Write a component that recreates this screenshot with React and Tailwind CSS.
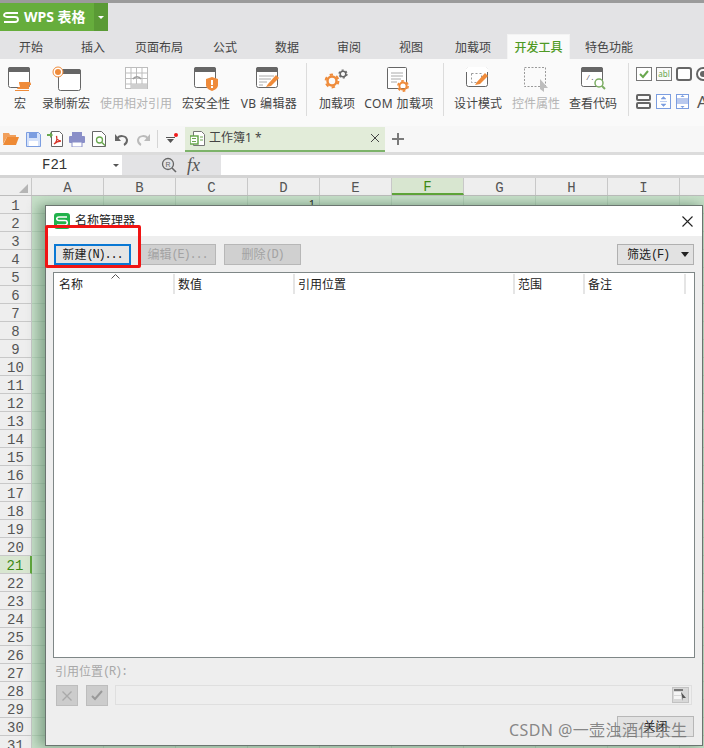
import React from "react";

const cjk = "font-['Microsoft_YaHei','Noto_Sans','Noto_Sans_CJK_SC',sans-serif]";
const mono = "font-['Liberation_Mono','Noto_Sans_CJK_SC',monospace]";
const half = "font-['Liberation_Mono',monospace] text-[12px] tracking-[-1.2px]";

const Win = ({ x = 0, y = 0, w = 22, h = 21, bar = "#666" }) => (
  <g>
    <rect x={x + 0.5} y={y + 0.5} width={w} height={h} rx="2" fill="#fff" stroke="#666" />
    <path d={`M${x} ${y + 2}a2 2 0 0 1 2-2h${w - 3}a2 2 0 0 1 2 2v3h-${w + 1}z`} fill={bar} />
  </g>
);

const Pencil = ({ x, y }) => (
  <g transform={`translate(${x} ${y})`}>
    <path d="M2 11 L10 2 L13 5 L5 13 L0 14z" fill="#ef8b3a" />
  </g>
);

const Gear = ({ cx, cy, r, c, hole = "#fff" }) => (
  <g>
    <circle cx={cx} cy={cy} r={r} fill="none" stroke={c} strokeWidth={r * 0.55} />
    <circle cx={cx} cy={cy} r={r + r * 0.42} fill="none" stroke={c} strokeWidth={r * 0.45} strokeDasharray={`${r * 0.75} ${r * 0.75}`} />
    <circle cx={cx} cy={cy} r={r * 0.5} fill={hole} />
  </g>
);

const icons = {
  macro: (
    <svg width="28" height="26" viewBox="0 0 28 26">
      <Win x={1} y={1} w={21} h={20} />
      <path d="M12 16h10a2 2 0 0 1 2 2v1l-2 0 0 4H10l1-2h2l-1-4z" fill="#ef8b3a" />
      <path d="M8 24h14v1H8z" fill="#ef8b3a" />
    </svg>
  ),
  rec: (
    <svg width="30" height="28" viewBox="0 0 30 28">
      <Win x={6} y={3} w={22} h={21} />
      <circle cx="6" cy="6" r="5" fill="#fff" stroke="#ef8b3a" />
      <circle cx="6" cy="6" r="3" fill="#ef8b3a" />
    </svg>
  ),
  rel: (
    <svg width="26" height="26" viewBox="0 0 26 26" fill="none" stroke="#bdbdbd">
      <rect x="1.5" y="1.5" width="22" height="21" fill="#fff" />
      <path d="M7 2v20M12.5 2v20M18 2v20M2 7h21M2 12.500h21M2 18h21" />
      <rect x="7" y="18" width="16" height="5" fill="#cfcfcf" stroke="none" />
      <path d="M9 13c2-3 6-3 8 0" stroke="#9c9c9c" strokeWidth="1.500" />
    </svg>
  ),
  sec: (
    <svg width="28" height="26" viewBox="0 0 28 26">
      <Win x={1} y={1} w={21} h={20} />
      <path d="M13 13l6-2 6 2v6c0 3-3 5-6 6-3-1-6-3-6-6z" fill="#ef8b3a" />
      <rect x="18" y="14" width="2" height="5" fill="#fff" />
      <rect x="18" y="20" width="2" height="2" fill="#fff" />
    </svg>
  ),
  vb: (
    <svg width="30" height="26" viewBox="0 0 30 26">
      <Win x={1} y={1} w={21} h={20} />
      <path d="M4 10h15M4 13h12M4 16h8M4 19h4" stroke="#aaa" />
      <Pencil x={11} y={7} />
    </svg>
  ),
  addin: (
    <svg width="30" height="26" viewBox="0 0 30 26">
      <Gear cx={9} cy={15} r={4.500} c="#ef8b3a" hole="#fafafa" />
      <Gear cx={20} cy={8} r={2.800} c="#666" hole="#fafafa" />
    </svg>
  ),
  com: (
    <svg width="28" height="28" viewBox="0 0 28 28">
      <path d="M1.500 2.500a1 1 0 0 1 1-1h17a1 1 0 0 1 1 1V22.500h-19z" fill="#fff" stroke="#666" />
      <path d="M5 7h12M5 10h12M5 13h10M5 16h6" stroke="#aaa" />
      <Gear cx={17} cy={20} r={3.600} c="#ef8b3a" hole="#fff" />
    </svg>
  ),
  design: (
    <svg width="28" height="26" viewBox="0 0 28 26">
      <Win x={1} y={1} w={21} h={19} bar="#fff" />
      <rect x="6.500" y="7.500" width="10" height="9" fill="none" stroke="#999" strokeDasharray="2 2" />
      <Pencil x={10} y={5} />
    </svg>
  ),
  ctrl: (
    <svg width="28" height="28" viewBox="0 0 28 28">
      <rect x="1.500" y="1.500" width="21" height="19" fill="none" stroke="#999" strokeDasharray="2 1.500" />
      <path d="M17 13l8 9h-4v4l-4 -3z" fill="#bdbdbd" />
    </svg>
  ),
  code: (
    <svg width="28" height="26" viewBox="0 0 28 26">
      <Win x={1} y={1} w={21} h={19} />
      <text x="6" y="14" fontSize="7" fill="#555" fontFamily="Liberation Mono">/...</text>
      <circle cx="19" cy="17" r="4" fill="#fff" stroke="#7cae63" strokeWidth="1.500" />
      <path d="M22 20l3 3" stroke="#7cae63" strokeWidth="2" />
    </svg>
  ),
};

const ribbon = [
  { w: "w-[40px]", icon: icons.macro, label: "宏" },
  { w: "w-[52px]", icon: icons.rec, label: "录制新宏" },
  { w: "w-[88px]", icon: icons.rel, label: "使用相对引用", off: true },
  { w: "w-[52px]", icon: icons.sec, label: "宏安全性" },
  { w: "w-[74px]", icon: icons.vb, label: "VB 编辑器", wide: true },
  { sep: true },
  { w: "w-[60px]", icon: icons.addin, label: "加载项" },
  { w: "w-[64px]", icon: icons.com, label: "COM 加载项", wide: true },
  { w: "w-[12px]" },
  { sep: true },
  { w: "w-[68px]", icon: icons.design, label: "设计模式" },
  { w: "w-[48px]", icon: icons.ctrl, label: "控件属性", off: true },
  { w: "w-[66px]", icon: icons.code, label: "查看代码" },
  { w: "w-[2px]" },
  { sep: true },
];

const tabs = [
  ["开始", "w-[62px]"],
  ["插入", "w-[62px]"],
  ["页面布局", "w-[70px]"],
  ["公式", "w-[62px]"],
  ["数据", "w-[62px]"],
  ["审阅", "w-[62px]"],
  ["视图", "w-[62px]"],
  ["加载项", "w-[62px]"],
];

const QuickAccess = () => (
  <div className="flex h-[26px] shrink-0 items-center bg-[#f7f7f7] pl-[3px]">
    <svg width="16" height="14" viewBox="0 0 16 14" className="mr-[7px]">
      <path d="M0 1h6l1 2h6v2H4L0 12z" fill="#f1a05c" />
      <path d="M4 5h12l-3 8H0z" fill="#ee8a35" />
    </svg>
    <svg width="15" height="15" viewBox="0 0 15 15" className="mr-[6px]">
      <path d="M.5.500h12l2 2v12H.500z" fill="#d5e2fa" stroke="#7b9de0" />
      <rect x="3" y="1" width="8" height="5" fill="#7b9de0" />
      <rect x="3" y="9" width="9" height="5" fill="#fff" />
    </svg>
    <svg width="16" height="16" viewBox="0 0 16 16" className="mr-[6px]">
      <path d="M4.500 .500h8l3 3v12h-11z" fill="#fff" stroke="#666" />
      <path d="M0 3h3V1l3 3-3 3V5H0z" fill="#6aa84f" />
      <path d="M7 13c3-2 3-6 2.500-8 0 3 2 5 4.500 5-3 0-5 1-7 3z" fill="none" stroke="#d9362b" strokeWidth="1.300" />
    </svg>
    <svg width="16" height="15" viewBox="0 0 16 15" className="mr-[7px]">
      <rect x="3" y="0" width="10" height="4" fill="#8a8fc8" />
      <rect x="0" y="4" width="16" height="7" rx="1" fill="#8a8fc8" />
      <rect x="3" y="10" width="10" height="5" fill="#fff" stroke="#8a8fc8" />
    </svg>
    <svg width="15" height="16" viewBox="0 0 15 16" className="mr-[7px]">
      <path d="M.5.500h9l4 4v11H.500z" fill="#fff" stroke="#666" />
      <circle cx="7.500" cy="9" r="3" fill="none" stroke="#6aa84f" strokeWidth="1.300" />
      <path d="M10 11.500l3 3" stroke="#6aa84f" strokeWidth="1.500" />
    </svg>
    <svg width="15" height="15" viewBox="0 0 15 15" className="mr-[7px]" fill="none">
      <path d="M3 7c2-4 9-4 10 1 0 2-1 4-3 5" stroke="#666" strokeWidth="2" />
      <path d="M1 2v7h6z" fill="#666" />
    </svg>
    <svg width="15" height="15" viewBox="0 0 15 15" className="mr-[6px]" fill="none">
      <path d="M12 7c-2-4-9-4-10 1 0 2 1 4 3 5" stroke="#bbb" strokeWidth="2" />
      <path d="M14 2v7H8z" fill="#bbb" />
    </svg>
    <div className="mr-[8px] h-[18px] w-px bg-[#d5d5d5]" />
    <svg width="13" height="12" viewBox="0 0 13 12" className="mr-[6px]">
      <path d="M0 4h9v1H0zM1 6h7L4.500 10z" fill="#555" />
      <circle cx="10" cy="2" r="2" fill="#f01c1c" />
    </svg>
    <div className="flex h-[25px] w-[200px] items-center border-b-2 border-[#7db36a] bg-[#e2ecd9] pl-[5px] pr-[4px]">
      <svg width="15" height="15" viewBox="0 0 15 15" className="mr-[4px]">
        <path d="M3.500.500h8l3 3v11h-11z" fill="#fff" stroke="#777" />
        <rect x="0" y="5" width="8" height="8" fill="#fff" stroke="#6aa84f" strokeWidth="1.500" />
        <path d="M2 7.500h4M2 10.500h4M10 6h3M10 9h3" stroke="#6aa84f" />
      </svg>
      <span className="text-[12px] leading-none text-[#444]">工作簿1 *</span>
      <svg width="10" height="10" viewBox="0 0 10 10" className="ml-auto mr-[1px]" stroke="#444">
        <path d="M1 1l8 8M9 1l-8 8" />
      </svg>
    </div>
    <svg width="14" height="14" viewBox="0 0 14 14" className="ml-[6px]" stroke="#7a7a7a" strokeWidth="2">
      <path d="M7 1v12M1 7h12" />
    </svg>
  </div>
);

const Ribbon = () => (
  <div className="flex h-[67px] shrink-0 bg-[#fafafa]">
    {ribbon.map((r, i) =>
      r.sep ? (
        <div key={i} className="mt-[4px] h-[53px] w-px shrink-0 bg-[#dcdcdc]" />
      ) : (
        <div key={i} className={`${r.w} flex shrink-0 flex-col items-center`}>
          <div className="flex h-[34px] items-start pl-[1px] pt-[7px]">{r.icon}</div>
          {r.label && (
            <span
              className={`mt-[3px] whitespace-nowrap text-[12px] leading-[16px] ${r.off ? "text-[#b4b4b4]" : "text-[#444]"} ${
                r.wide ? "tracking-[0.4px]" : ""
              }`}
            >
              {r.label}
            </span>
          )}
        </div>
      )
    )}
    <div className="ml-[7px] flex flex-col gap-[12px] pt-[8px]">
      <div className="flex gap-[4px]">
        <svg width="16" height="14" viewBox="0 0 16 14">
          <rect x=".5" y=".5" width="15" height="13" fill="#fff" stroke="#777" />
          <path d="M4 7l3 3 5-6" fill="none" stroke="#6aa84f" strokeWidth="2" />
        </svg>
        <div className="flex h-[14px] w-[16px] items-center justify-center border border-[#777] text-[8px] leading-none text-[#6aa84f]">abl</div>
        <div className="h-[14px] w-[16px] rounded-[3px] border-2 border-[#666] bg-white" />
        <div className="-mr-[6px] flex h-[14px] w-[14px] items-center justify-center rounded-full border-2 border-[#666] bg-white">
          <div className="h-[6px] w-[6px] rounded-full bg-[#666]" />
        </div>
      </div>
      <div className="flex items-center gap-[5px]">
        <div className="flex w-[15px] flex-col gap-[1px]">
          <div className="h-[7px] rounded-[2px] border-2 border-[#666]" />
          <div className="h-[7px] rounded-[2px] border-2 border-[#666]" />
        </div>
        <svg width="15" height="15" viewBox="0 0 15 15">
          <rect x=".5" y=".5" width="14" height="14" fill="#fff" stroke="#7b9de0" />
          <path d="M5 5l2.500-2.500L10 5zM5 10l2.500 2.500L10 10zM4 7.500h7" fill="#7b9de0" stroke="#7b9de0" strokeWidth=".5" />
        </svg>
        <svg width="13" height="15" viewBox="0 0 13 15">
          <rect x=".5" y=".5" width="12" height="14" fill="#fff" stroke="#7b9de0" />
          <rect x="1" y="4" width="11" height="6" fill="#b9c9ee" />
          <path d="M4.500 3l2-2 2 2zM4.500 12l2 2 2-2z" fill="#7b9de0" />
        </svg>
        <span className="ml-[3px] text-[17px] leading-none text-[#555]">A</span>
      </div>
    </div>
  </div>
);

const cols = ["A", "B", "C", "D", "E", "F", "G", "H", "I", ""];
const rows = Array.from({ length: 31 }, (_, i) => i + 1);

const Sheet = () => (
  <div className="flex-1 overflow-hidden bg-[#c6dfc8]">
    <div className="flex h-[18px] border-b border-[#bdbdbd] bg-[#eeeeee]">
      <div className="flex w-[32px] shrink-0 items-end justify-end border-r border-[#c8c8c8] pb-[2px] pr-[3px]">
        <div className="h-0 w-0 border-b-[9px] border-l-[9px] border-b-[#b5b5b5] border-l-transparent" />
      </div>
      {cols.map((c) => (
        <div
          key={c || "x"}
          className={`flex w-[72px] shrink-0 items-center justify-center border-r border-[#c8c8c8] pt-[2px] text-[14px] leading-none ${mono} ${
            c === "F" ? "border-b-2 border-b-[#5fa53a] bg-[#d8e6d0] text-[#3d8a14]" : "text-[#555]"
          }`}
        >
          {c}
        </div>
      ))}
    </div>
    <div className="flex">
      <div className="w-[32px] shrink-0 bg-[#eeeeee]">
        {rows.map((r) => (
          <div
            key={r}
            className={`flex h-[18px] items-center justify-center border-b border-[#c8c8c8] pt-[2px] text-[14px] leading-none ${mono} ${
              r === 21 ? "border-r-2 border-r-[#5fa53a] bg-[#d8e6d0] text-[#3d8a14]" : "border-r border-r-[#c8c8c8] text-[#555]"
            }`}
          >
            {r}
          </div>
        ))}
      </div>
      <div className="flex-1">
        {rows.map((r) => (
          <div key={r} className="flex h-[18px]">
            {cols.map((c, i) => (
              <div key={i} className="relative w-[72px] shrink-0 border-b border-r border-[#b4d0b8]">
                {r === 1 && c === "D" && <span className="absolute right-[4px] top-[2px] text-[11px] leading-none text-[#222]">1</span>}
              </div>
            ))}
          </div>
        ))}
      </div>
    </div>
  </div>
);

const Btn = ({ zh, en, className = "" }) => (
  <div className={`flex h-[21px] w-[77px] shrink-0 items-center justify-center text-[12px] leading-none ${className}`}>
    {zh && <span>{zh}</span>}
    {en && <span className={half}>{en}</span>}
  </div>
);

const heads = [
  ["名称", "w-[121px] pl-[5px]"],
  ["数值", "w-[120px] pl-[3px]"],
  ["引用位置", "w-[220px] pl-[3px]"],
  ["范围", "w-[70px] pl-[3px]"],
  ["备注", "w-[101px] pl-[3px]"],
];

const Dialog = () => (
  <div className="absolute left-[45px] top-[205px] flex h-[541px] w-[658px] flex-col border border-[#6b7570] bg-[#eeeeee] shadow-[-8px_0_10px_rgba(70,110,80,0.35),0_0_10px_rgba(70,110,80,0.3)]">
    <div className="flex h-[30px] shrink-0 items-center bg-white pl-[8px] pr-[9px]">
      <div className="mr-[5px] flex h-[16px] w-[16px] items-center justify-center rounded-[3px] bg-[#21b24b]">
        <svg width="12" height="10" viewBox="0 0 12 10" fill="none" stroke="#fff" strokeWidth="1.600">
          <path d="M11 1H3C0 1 0 4.500 3 4.500h6C12 4.500 12 9 9 9H1" />
        </svg>
      </div>
      <span className="text-[12px] leading-none text-[#222]">名称管理器</span>
      <svg width="11" height="11" viewBox="0 0 11 11" className="ml-auto" stroke="#222" strokeWidth="1.100">
        <path d="M.5.500l10 10M10.500.500l-10 10" />
      </svg>
    </div>
    <div className="flex shrink-0 items-center gap-[8px] pl-[8px] pr-[8px] pt-[8px]">
      <Btn zh="新建" en="(N)..." className="border-2 border-[#0a78d4] bg-[#e5e5e5] text-[#222]" />
      <Btn zh="编辑" en="(E)..." className="border border-[#b7b7b7] bg-[#d0d0d0] text-[#a3a3a3]" />
      <Btn zh="删除" en="(D)" className="border border-[#b7b7b7] bg-[#d0d0d0] text-[#a3a3a3]" />
      <div className="ml-auto flex h-[21px] w-[77px] shrink-0 items-center border border-[#b0b0b0] bg-[#e2e2e2] pl-[9px] pr-[4px] text-[12px] leading-none text-[#222]">
        <span>筛选</span>
        <span className={half}>(F)</span>
        <span className="ml-auto h-0 w-0 border-x-[4px] border-t-[5px] border-x-transparent border-t-[#222]" />
      </div>
    </div>
    <div className="relative ml-[7px] mt-[7px] h-[386px] w-[642px] shrink-0 border border-[#7f8787] bg-white">
      <div className="flex h-[22px]">
        {heads.map(([t, w]) => (
          <div key={t} className={`${w} my-[1px] flex items-center border-r-2 border-[#e5e5e5] pt-[2px] text-[12px] leading-none text-[#222]`}>
            {t}
          </div>
        ))}
      </div>
      <svg width="9" height="5" viewBox="0 0 9 5" className="absolute left-[57px] top-[1px]" fill="none" stroke="#555">
        <path d="M.5 4.500l4-4 4 4" />
      </svg>
    </div>
    <div className="ml-[9px] mt-[7px] flex h-[14px] items-center text-[12px] leading-none text-[#a8a8a8]">
      <span>引用位置</span>
      <span className={half}>(R):</span>
    </div>
    <div className="ml-[10px] mr-[10px] mt-[6px] flex items-start">
      <div className="flex h-[21px] w-[22px] items-center justify-center border border-[#bdbdbd] bg-[#cccccc]">
        <svg width="10" height="10" viewBox="0 0 10 10" stroke="#a9a9a9" strokeWidth="1.300">
          <path d="M.5.500l9 9M9.500.500l-9 9" />
        </svg>
      </div>
      <div className="ml-[8px] flex h-[21px] w-[22px] items-center justify-center border border-[#bdbdbd] bg-[#cccccc]">
        <svg width="12" height="11" viewBox="0 0 12 11" fill="none" stroke="#999" strokeWidth="2">
          <path d="M1 6l3 3 7-8" />
        </svg>
      </div>
      <div className="ml-[7px] flex h-[20px] flex-1 items-center justify-end border border-[#dfdfdf] bg-[#eeeeee] pr-[2px]">
        <div className="flex h-[16px] w-[17px] items-center justify-center border border-[#c2c2c2] bg-[#d8d8d8]">
          <svg width="13" height="12" viewBox="0 0 13 12">
            <path d="M0 0h9v2H0z" fill="#777" />
            <path d="M0 3h7v3H0zM0 7h7v3H0z" fill="#f5f5f5" />
            <path d="M7 3l5 6H9l0 3z" fill="#555" />
          </svg>
        </div>
      </div>
    </div>
    <div className="mt-[10px] flex justify-end pr-[8px]">
      <Btn zh="关闭" className="border border-[#b7b7b7] bg-[#e2e2e2] text-[#222]" />
    </div>
  </div>
);

export default function App() {
  return (
    <div className={`relative flex h-[748px] w-[704px] flex-col overflow-hidden bg-[#e3e3e5] ${cjk}`}>
      <div className="h-[3px] shrink-0 bg-[#9b9b9b]" />
      <div className="flex h-[28px] shrink-0">
        <div className="flex h-full w-[94px] items-center bg-[#66ad3c] pl-[3px]">
          <svg width="16" height="11" viewBox="0 0 16 11" fill="none" stroke="#fff" strokeWidth="1.800" className="mr-[5px]">
            <path d="M15 1H4C0 1 0 5 4 5h8c4 0 4 5 0 5H1" />
          </svg>
          <span className="whitespace-nowrap text-[14px] font-bold leading-none text-white">WPS 表格</span>
        </div>
        <div className="flex h-full w-[14px] items-center justify-center bg-[#5a9a35]">
          <div className="h-0 w-0 border-x-[3px] border-t-[3px] border-x-transparent border-t-white" />
        </div>
      </div>
      <div className="flex h-[28px] shrink-0 items-end">
        {tabs.map(([t, w]) => (
          <div key={t} className={`${w} flex h-[25px] shrink-0 items-center justify-center pt-[2px] text-[12px] leading-none text-[#444]`}>
            {t}
          </div>
        ))}
        <div className="ml-[3px] flex h-[25px] w-[63px] shrink-0 items-center justify-center border-x border-t border-[#f3f3f3] bg-[#fafafa] pt-[2px] text-[12px] font-medium leading-none text-[#4f9a25]">
          开发工具
        </div>
        <div className="flex h-[25px] w-[78px] shrink-0 items-center justify-center pt-[2px] text-[12px] leading-none text-[#444]">特色功能</div>
      </div>
      <Ribbon />
      <QuickAccess />
      <div className="flex h-[26px] shrink-0 items-center border-b-[3px] border-t-[3px] border-b-[#d4d4d4] border-t-[#dcdcdc] bg-[#e3e3e5]">
        <div className="flex h-[20px] w-[122px] items-center bg-white pl-[42px] pr-[3px]">
          <span className={`text-[14px] leading-none text-[#333] ${mono}`}>F21</span>
          <span className="ml-auto h-0 w-0 border-x-[3px] border-t-[3px] border-x-transparent border-t-[#555]" />
        </div>
        <svg width="16" height="16" viewBox="0 0 16 16" fill="none" className="ml-[39px]">
          <circle cx="7" cy="7" r="5.500" stroke="#666" strokeWidth="1.300" />
          <path d="M11 11l4 4" stroke="#666" strokeWidth="1.600" />
          <text x="4.500" y="9.500" fontSize="7" fill="#666" fontFamily="Liberation Sans">R</text>
        </svg>
        <span className="ml-[10px] w-[23px] font-['Liberation_Serif'] text-[18px] italic leading-none text-[#555]">fx</span>
        <div className="ml-[11px] h-[20px] flex-1 bg-white" />
      </div>
      <Sheet />
      <Dialog />
      <div className="absolute left-[45px] top-[225px] h-[43px] w-[96px] rounded-[2px] border-[3px] border-[#f01414]" />
      <div className="absolute left-[509px] top-[720px] whitespace-nowrap text-[16px] leading-[20px] tracking-[0.4px] text-[#6b6b6b]/80">CSDN @一壶浊酒伴余生</div>
    </div>
  );
}
